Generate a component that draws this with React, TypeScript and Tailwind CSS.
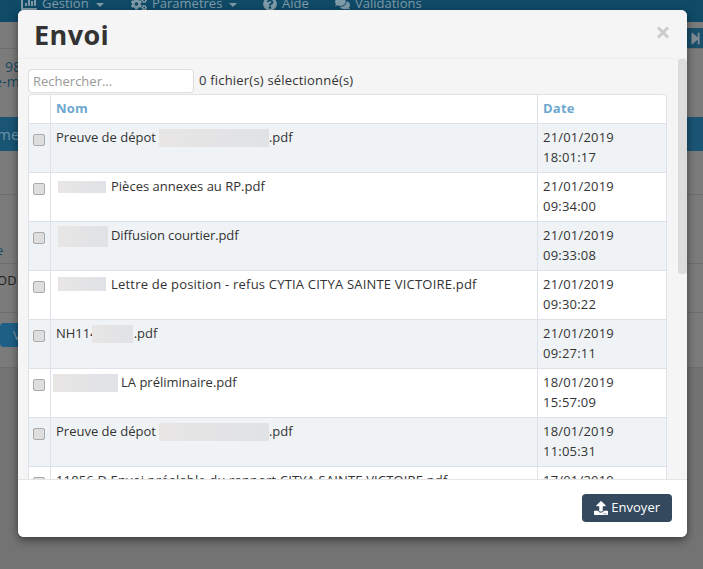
import { FaChartBar, FaCogs, FaComments, FaQuestionCircle, FaStepForward, FaUpload } from "react-icons/fa";

const rows = [
  { before: "Preuve de dépot", blur: "ml-[3px] w-[110px] h-[18px] mt-[2px]", after: ".pdf", track: "tracking-normal", date: "21/01/2019", time: "18:01:17" },
  { before: "", blur: "ml-[2px] mr-[5px] w-[48px] h-[12px] mt-[5px]", after: "Pièces annexes au RP.pdf", track: "tracking-normal", date: "21/01/2019", time: "09:34:00" },
  { before: "", blur: "ml-[2px] mr-[3px] w-[50px] h-[21px] mt-[1px]", after: "Diffusion courtier.pdf", track: "tracking-[-0.1px]", date: "21/01/2019", time: "09:33:08" },
  { before: "", blur: "ml-[2px] mr-[5px] w-[48px] h-[14px] mt-[3px]", after: "Lettre de position - refus CYTIA CITYA SAINTE VICTOIRE.pdf", track: "tracking-[0.2px]", date: "21/01/2019", time: "09:30:22" },
  { before: "NH114", blur: "-ml-[6px] mr-[1px] w-[41px] h-[18px] mt-[2px]", after: ".pdf", track: "tracking-normal", date: "21/01/2019", time: "09:27:11" },
  { before: "", blur: "-ml-[3px] mr-[3px] w-[65px] h-[18px] mt-[2px]", after: "LA préliminaire.pdf", track: "tracking-normal", date: "18/01/2019", time: "15:57:09" },
  { before: "Preuve de dépot", blur: "ml-[3px] w-[110px] h-[18px] mt-[2px]", after: ".pdf", track: "tracking-normal", date: "18/01/2019", time: "11:05:31" },
  { before: "", blur: "", after: "11856 D Envoi préalable du rapport CITYA SAINTE VICTOIRE.pdf", track: "tracking-[0.15px]", date: "17/01/2019", time: "16:40:12" },
];

const navItems = [
  { icon: <FaChartBar size={16} />, label: "Gestion", caret: true, width: "w-[110px]" },
  { icon: <FaCogs size={16} />, label: "Paramètres", caret: true, width: "w-[132px]" },
  { icon: <FaQuestionCircle size={14} />, label: "Aide", caret: false, width: "w-[72px]" },
  { icon: <FaComments size={15} />, label: "Validations", caret: false, width: "w-[90px]" },
];

const App = () => {
  return (
    <div className="relative h-[569px] w-[703px] overflow-hidden bg-[#7b7b7b] font-['Open_Sans',sans-serif] text-[13px] tracking-[0.2px] text-[#333]">
      {/* page behind the dialog */}
      <div className="h-[22px] overflow-hidden bg-[#0f4a67] pl-[21px] tracking-normal text-[#7f9aa8]">
        <div className="-mt-[6px] flex items-center">
          {navItems.map((item) => (
            <div key={item.label} className={`flex shrink-0 items-center gap-[5px] ${item.width}`}>
              {item.icon}
              <span>{item.label}</span>
              {item.caret && (
                <span className="ml-[2px] mt-[3px] h-0 w-0 border-x-[4px] border-t-[4px] border-x-transparent border-t-[#7f9aa8]" />
              )}
            </div>
          ))}
        </div>
      </div>
      <div className="flex h-[27px] justify-end border-b border-[#6e6e6e]">
        <div className="mt-[6px] flex h-[20px] w-[16px] items-center justify-center bg-[#1a4f6c] text-[#7f8c94]">
          <FaStepForward size={13} />
        </div>
      </div>
      <div className="h-[68px] overflow-hidden pt-[10px] text-[14px] leading-[15px] text-[#17475f]">
        <p className="pl-[5px]">98</p>
        <p className="-ml-[6px]">e-m</p>
      </div>
      <div className="h-[34px] overflow-hidden bg-[#1a5574] text-[15px] leading-[34px] text-[#6f93a6]">
        <span className="-ml-[3px] block">me</span>
      </div>
      <div className="h-[44px] border-b border-[#6e6e6e]" />
      <div className="h-[69px] overflow-hidden border-b border-[#6e6e6e] pt-[47px] leading-[16px] text-[#17475f]">
        <span className="-ml-[4px] block">e</span>
      </div>
      <div className="h-[49px] overflow-hidden border-b border-[#6e6e6e] pt-[8px] leading-[16px] text-[#222]">
        <span className="-ml-[3px] block">ODE</span>
      </div>
      <div className="h-[55px] border-b border-[#6e6e6e] pt-[10px]">
        <div className="h-[24px] w-[60px] rounded-[4px] bg-[#1e5f86] pl-[13px] leading-[24px] text-[#7f9aa8]">V</div>
      </div>
      <div className="h-[201px] bg-[#737373]" />

      <div className="absolute left-[18px] top-[10px] flex h-[527px] w-[669px] flex-col overflow-hidden rounded-[6px] bg-white shadow-[0_3px_9px_rgba(0,0,0,0.5)]">
        <div className="flex h-[49px] shrink-0 items-start justify-between border-b border-[#eee] bg-[#f5f5f5] pl-[16px] pr-[16px]">
          <h4 className="text-[27px] leading-[49px] font-bold tracking-[0.4px] text-[#333]">Envoi</h4>
          <span className="text-[27px] leading-[44px] font-bold text-[#ccc]">×</span>
        </div>

        <div className="relative flex-1 overflow-hidden bg-[#f5f5f5] pl-[10px] pr-[20px] pt-[10px]">
          <div className="flex items-center gap-[5px]">
            <input
              readOnly
              placeholder="Rechercher..."
              className="h-[24px] w-[166px] rounded-[4px] border border-[#ddd] bg-white px-[4px] text-[13px] tracking-normal placeholder:text-[#999]"
            />
            <span>0 fichier(s) sélectionné(s)</span>
          </div>
          <div className="mt-[1px] overflow-hidden rounded-t-[4px] border border-[#dde2e8] bg-white">
            <div className="flex h-[29px] border-b border-[#dde2e8]">
              <div className="w-[22px] border-r border-[#dde2e8]" />
              <div className="flex-1 px-[5px] font-bold leading-[27px] text-[#6ea8d1]">Nom</div>
              <div className="w-[129px] border-l border-[#dde2e8] px-[5px] font-bold leading-[27px] text-[#6ea8d1]">Date</div>
            </div>
            {rows.map((row, i) => (
              <div key={i} className={`flex h-[49px] border-b border-[#dde2e8] ${i % 2 === 0 ? "bg-[#f0f3f6]" : "bg-white"}`}>
                <div className="flex w-[22px] justify-center border-r border-[#dde2e8] pr-[1px] pt-[10px]">
                  <span className="h-[12px] w-[12px] rounded-[2px] border border-[#aaa] bg-[#dedede]" />
                </div>
                <div className={`flex flex-1 items-start px-[5px] pt-[3px] leading-[20px] whitespace-nowrap ${row.track}`}>
                  {row.before && <span>{row.before}</span>}
                  {row.blur && <span className={`${row.blur} shrink-0 bg-gradient-to-r from-[#e8e6e5] to-[#e0e2e6]`} />}
                  <span>{row.after}</span>
                </div>
                <div className="w-[129px] border-l border-[#dde2e8] px-[5px] pt-[3px] leading-[20px]">
                  <div>{row.date}</div>
                  <div>{row.time}</div>
                </div>
              </div>
            ))}
          </div>
          <div className="absolute right-0 top-0 bottom-0 w-[9px] bg-[#f5f5f5]">
            <div className="h-[215px] rounded-[3px] bg-[#dcdcdc]" />
          </div>
        </div>

        <div className="flex h-[58px] shrink-0 items-start justify-end border-t border-[#e5e5e5] bg-white pr-[15px] pt-[14px]">
          <button className="flex h-[28px] items-center gap-[3px] rounded-[4px] bg-[#34495e] px-[12px] text-[13px] tracking-normal text-white">
            <FaUpload size={14} />
            Envoyer
          </button>
        </div>
      </div>
    </div>
  );
};

export default App;
